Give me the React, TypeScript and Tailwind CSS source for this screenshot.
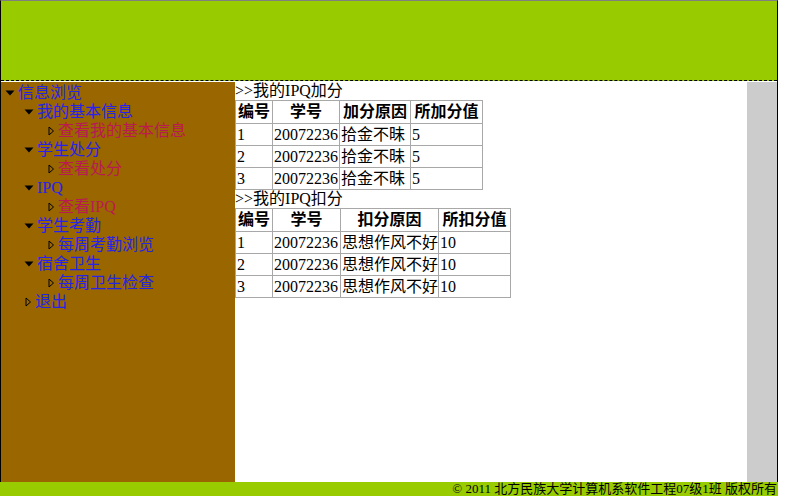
import React from 'react'

const font = { fontFamily: '"Liberation Serif", "Noto Sans CJK SC", serif' }

type Node = { label: string; level: number; open?: boolean; visited?: boolean }

const tree: Node[] = [
  { label: '信息浏览', level: 0, open: true },
  { label: '我的基本信息', level: 1, open: true },
  { label: '查看我的基本信息', level: 2, visited: true },
  { label: '学生处分', level: 1, open: true },
  { label: '查看处分', level: 2, visited: true },
  { label: 'IPQ', level: 1, open: true },
  { label: '查看IPQ', level: 2, visited: true },
  { label: '学生考勤', level: 1, open: true },
  { label: '每周考勤浏览', level: 2 },
  { label: '宿舍卫生', level: 1, open: true },
  { label: '每周卫生检查', level: 2 },
  { label: '退出', level: 1 },
]

const indent = ['pl-[4px]', 'pl-[23px]', 'pl-[46px]']

const Arrow = ({ open }: { open?: boolean }) =>
  open ? (
    <svg width="12" height="8" viewBox="0 0 12 8" className="shrink-0">
      <path d="M0.5 1.5 L9.5 1.5 L5 6.5 Z" fill="#000" />
    </svg>
  ) : (
    <svg width="10" height="10" viewBox="0 0 10 10" className="shrink-0">
      <path d="M2 1 L6.5 5 L2 9 Z" fill="none" stroke="#000" strokeWidth="1" />
    </svg>
  )

const ScoreTable = ({
  title,
  head,
  rows,
  widths,
}: {
  title: string
  head: string[]
  rows: string[][]
  widths: string[]
}) => (
  <div>
    <div className="text-[16px] leading-[18px] text-black">{title}</div>
    <table className="border-collapse text-[16px] text-black">
      <thead>
        <tr className="h-[23px]">
          {head.map((h, i) => (
            <th key={h} className={`border border-[#a8a8a8] px-0 font-bold text-center leading-[20px] ${widths[i]}`}>
              {h}
            </th>
          ))}
        </tr>
      </thead>
      <tbody>
        {rows.map(r => (
          <tr key={r[0]} className="h-[22px]">
            {r.map((c, i) => (
              <td key={i} className="border border-[#a8a8a8] px-0 pl-[1px] text-left leading-[20px] whitespace-nowrap">
                {c}
              </td>
            ))}
          </tr>
        ))}
      </tbody>
    </table>
  </div>
)

const App = () => {
  return (
    <div className="w-[786px] h-[496px] bg-white overflow-hidden" style={font}>
      <div className="w-[778px] border-t border-t-[#808080] border-l border-r border-l-black border-r-black">
        {/* Header */}
        <div className="h-[80px] bg-[#99cc00] border-b border-dashed border-b-black" />

        {/* Main */}
        <div className="flex h-[401px] pt-[1px]">
          <div className="w-[234px] bg-[#996600] pt-[1px]">
            {tree.map(n => (
              <div key={n.label} className={`flex items-center gap-[1px] h-[19px] ${indent[n.level]}`}>
                <Arrow open={n.open} />
                <span
                  className={`text-[16px] leading-[19px] whitespace-nowrap ${
                    n.visited ? 'text-[#b81a52]' : 'text-[#2424e6]'
                  }`}
                >
                  {n.label}
                </span>
              </div>
            ))}
          </div>

          <div className="flex-1 bg-white">
            <ScoreTable
              title=">>我的IPQ加分"
              head={['编号', '学号', '加分原因', '所加分值']}
              widths={['w-[37px]', 'w-[67px]', 'w-[71px]', 'w-[72px]']}
              rows={[
                ['1', '20072236', '拾金不昧', '5'],
                ['2', '20072236', '拾金不昧', '5'],
                ['3', '20072236', '拾金不昧', '5'],
              ]}
            />
            <ScoreTable
              title=">>我的IPQ扣分"
              head={['编号', '学号', '扣分原因', '所扣分值']}
              widths={['w-[37px]', 'w-[68px]', 'w-[98px]', 'w-[72px]']}
              rows={[
                ['1', '20072236', '思想作风不好', '10'],
                ['2', '20072236', '思想作风不好', '10'],
                ['3', '20072236', '思想作风不好', '10'],
              ]}
            />
          </div>

          <div className="w-[30px] bg-[#cccccc]" />
        </div>
      </div>

      {/* Footer */}
      <div className="w-[778px] h-[14px] bg-[#99cc00] flex justify-end items-center pr-[1px]">
        <span className="text-[13px] leading-[14px] text-black whitespace-nowrap">
          © 2011 北方民族大学计算机系软件工程07级1班 版权所有
        </span>
      </div>
    </div>
  )
}

export default App
